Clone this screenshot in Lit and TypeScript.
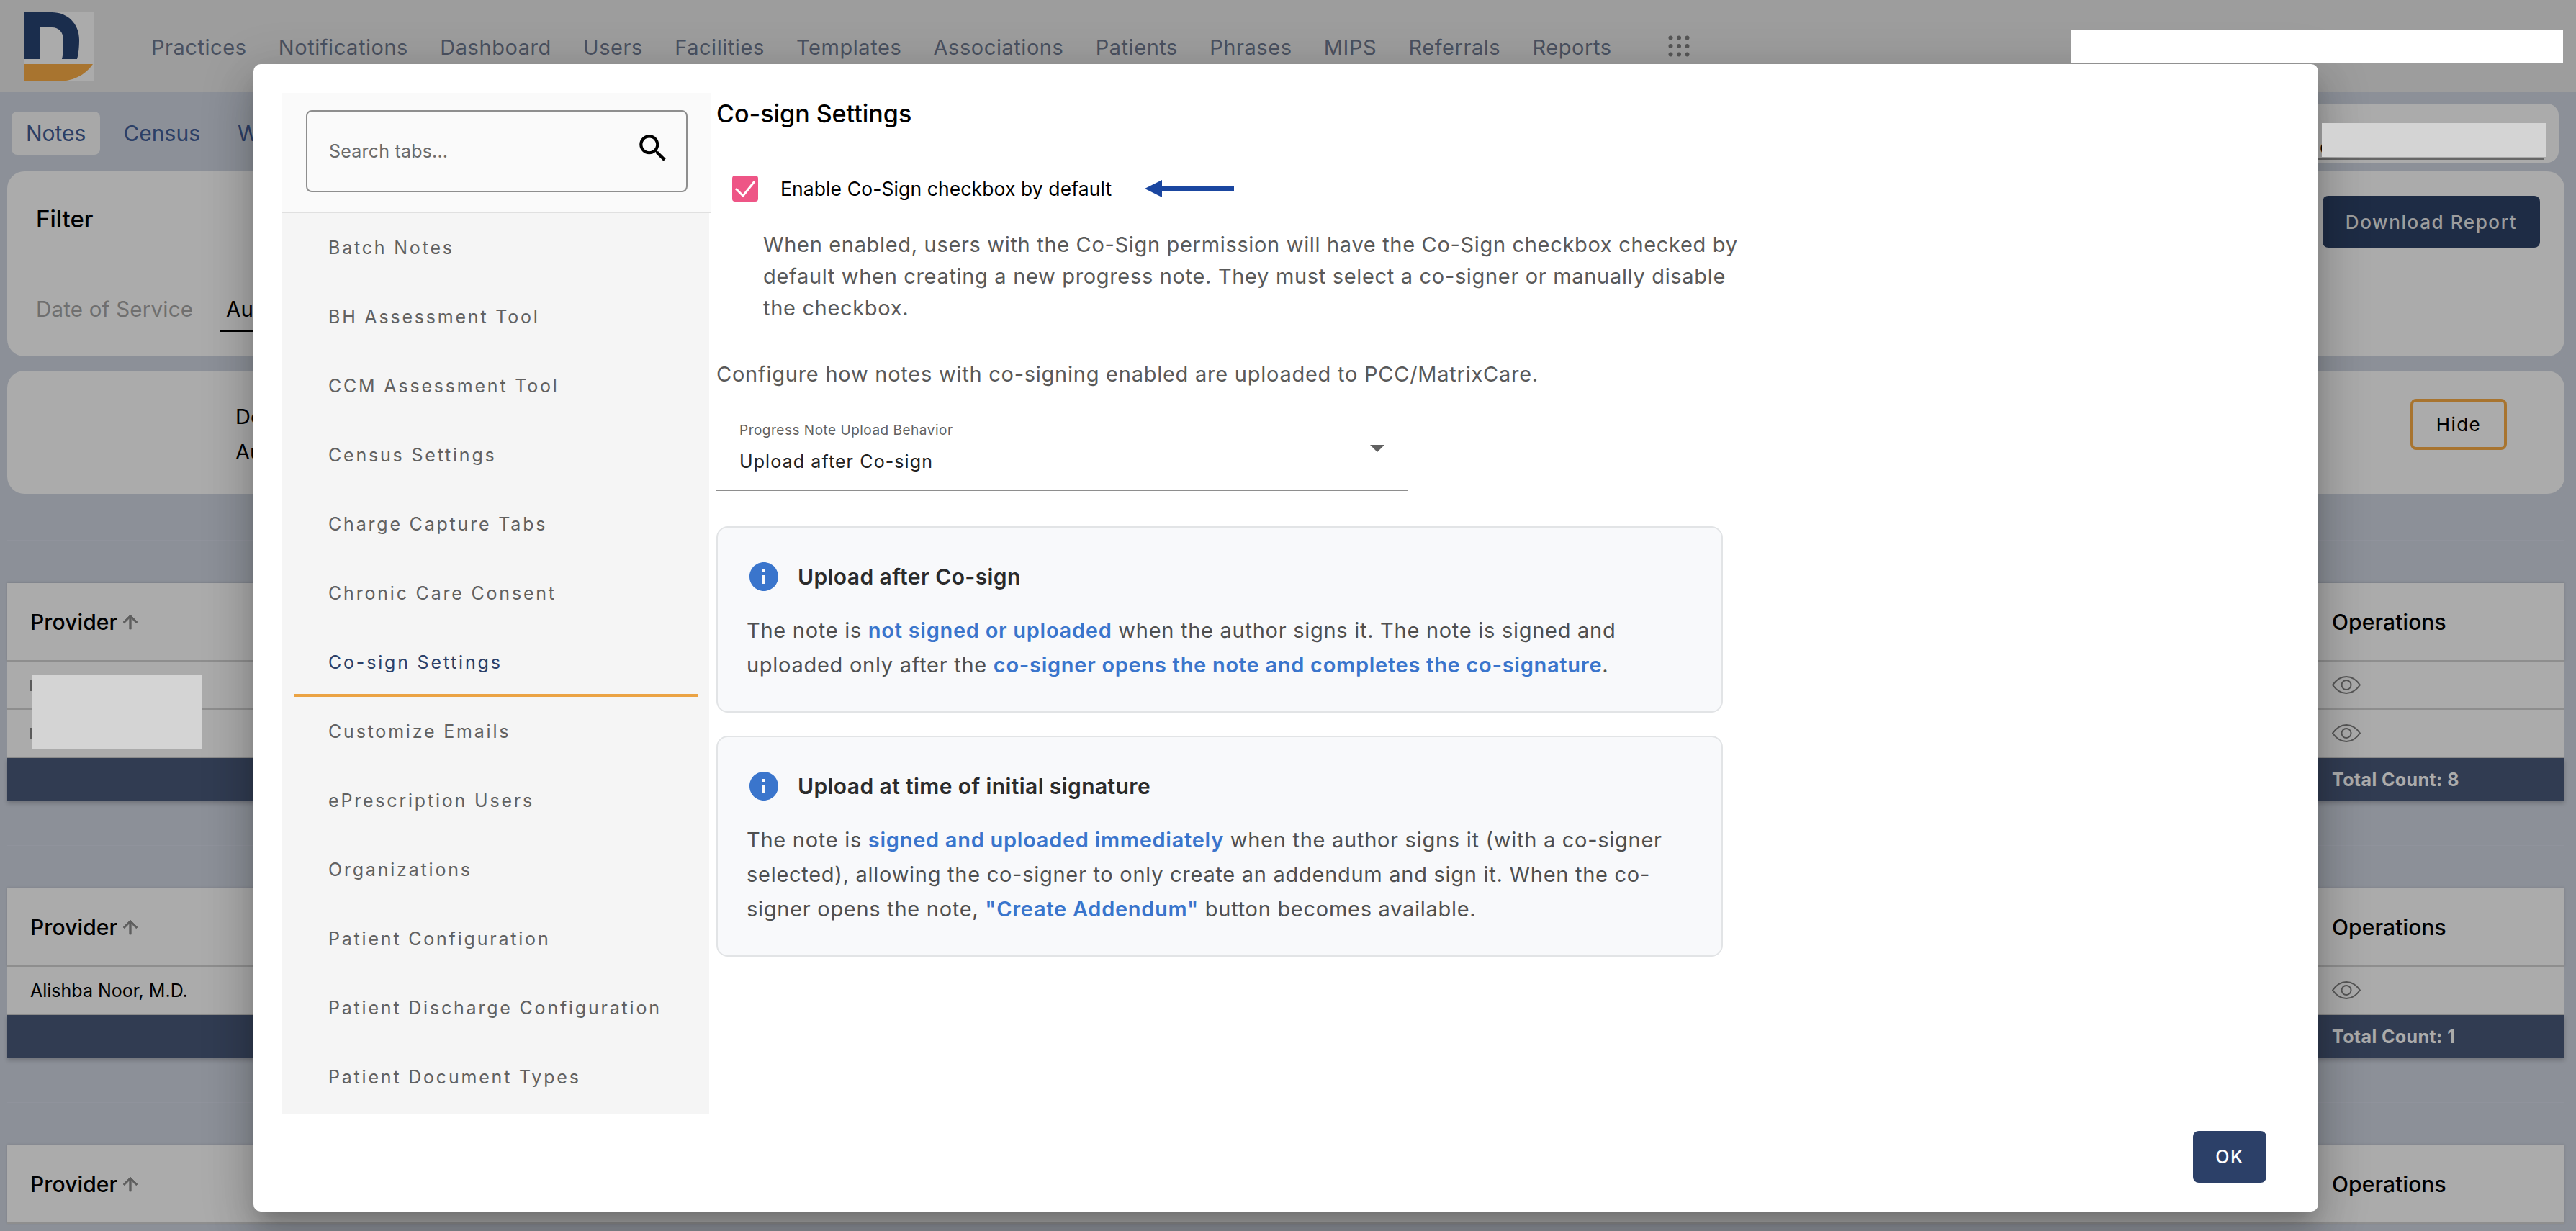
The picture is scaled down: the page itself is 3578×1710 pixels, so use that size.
import { LitElement, html, css, svg } from 'lit';
import { customElement } from 'lit/decorators.js';

const NAV = ['Practices', 'Notifications', 'Dashboard', 'Users', 'Facilities', 'Templates', 'Associations', 'Patients', 'Phrases', 'MIPS', 'Referrals', 'Reports'];
const TABS = ['Batch Notes', 'BH Assessment Tool', 'CCM Assessment Tool', 'Census Settings', 'Charge Capture Tabs', 'Chronic Care Consent', 'Co-sign Settings', 'Customize Emails', 'ePrescription Users', 'Organizations', 'Patient Configuration', 'Patient Discharge Configuration', 'Patient Document Types'];

const eye = html`<svg class="eye" viewBox="0 0 40 27" fill="none" stroke="currentColor" stroke-width="2"><path d="M1 13.5C7 5 13 2 20 2s13 3 19 11.5C33 22 27 25 20 25S7 22 1 13.5z"/><circle cx="20" cy="13.5" r="6.5"/></svg>`;

@customElement('cosign-dialog')
export class CosignDialog extends LitElement {
  static styles = css`
    :host {
      display: flex;
      flex-direction: column;
      box-sizing: border-box;
      width: 2868px;
      height: 1594px;
      padding: 40px 72px 40px 40px;
      background: #fff;
      border-radius: 10px;
      box-shadow: 0 16px 24px -10px rgba(0,0,0,.2), 0 36px 57px 4px rgba(0,0,0,.14), 0 14px 69px 12px rgba(0,0,0,.12);
      font-family: Inter, sans-serif;
      color: #000;
    }
    .body { display: flex; height: 1418px; }
    .side { width: 595px; flex: none; }
    .search-wrap {
      box-sizing: border-box;
      height: 167px;
      padding: 24px 32px 0 33px;
      background: #fafafa;
      border-bottom: 2px solid #e0e0e0;
    }
    .search {
      box-sizing: border-box;
      display: flex;
      align-items: center;
      justify-content: space-between;
      height: 114px;
      padding: 0 21px 0 30px;
      border: 2px solid #8e8e8e;
      border-radius: 8px;
      font-size: 25px;
      letter-spacing: 0.2px;
      color: #6b6b6b;
    }
    .search svg { width: 50px; height: 50px; margin-top: -8px; fill: #000; }
    .tabs { width: 593px; height: 1251px; box-sizing: border-box; padding: 0 16px; background: #f5f5f5; overflow: hidden; }
    .tab {
      box-sizing: border-box;
      display: flex;
      align-items: center;
      height: 96px;
      padding-left: 48px;
      font-size: 25px;
      letter-spacing: 2.8px;
      white-space: nowrap;
      color: #616161;
    }
    .tab.active { color: #2c4068; border-bottom: 4px solid #eba344; padding-top: 4px; }
    .main { margin-left: 8px; flex: 1; min-width: 0; }
    h2 { margin: 0; font-size: 34px; line-height: 58px; font-weight: 500; }
    .check { display: flex; align-items: center; height: 36px; margin: 57px 0 0 22px; }
    .box { width: 36px; height: 36px; border-radius: 4px; background: #ee5586; flex: none; }
    .box svg { display: block; }
    .check-label { margin-left: 31px; font-size: 26.5px; letter-spacing: 0.1px; white-space: nowrap; }
    .arrow { margin-left: 46px; width: 124px; height: 26px; }
    .desc { margin: 38px 0 0 65px; font-size: 29px; line-height: 44px; letter-spacing: 0.67px; color: #595959; white-space: nowrap; }
    .configure { margin-top: 48px; font-size: 29px; line-height: 44px; letter-spacing: 0.75px; color: #595959; white-space: nowrap; }
    .select {
      box-sizing: border-box;
      display: flex;
      justify-content: space-between;
      width: 960px;
      height: 98px;
      margin-top: 42px;
      padding: 0 32px;
      border-bottom: 2px solid #8e8e8e;
    }
    .select small { display: block; margin-top: 2px; font-size: 19px; line-height: 24px; letter-spacing: 0.5px; color: #616161; }
    .select span { display: block; margin-top: 11px; font-size: 25px; line-height: 40px; letter-spacing: 1.1px; color: #222; }
    .caret { width: 0; height: 0; margin-top: 34px; border: 10px solid transparent; border-top: 10px solid #616161; border-bottom: 0; }
    .card {
      box-sizing: border-box;
      width: 1398px;
      margin-top: 49px;
      padding: 48px 40px 40px;
      background: #f8f9fb;
      border: 2px solid #e2e4e6;
      border-radius: 16px;
    }
    .card + .card { margin-top: 32px; }
    .card-head { display: flex; align-items: center; height: 40px; gap: 23px; font-size: 30px; font-weight: 600; letter-spacing: 0.4px; color: #2b2b2b; white-space: nowrap; }
    .card-head svg { width: 48px; height: 48px; fill: #3a75cc; flex: none; }
    .card p { margin: 31px 0 0; font-size: 29px; line-height: 48px; letter-spacing: 0.72px; color: #4f4f4f; white-space: nowrap; }
    .card b { font-weight: 600; color: #3a75cc; }
    .foot { display: flex; justify-content: flex-end; margin-top: 24px; }
    .ok {
      width: 102px;
      height: 72px;
      border: 0;
      border-radius: 8px;
      background: #2c4068;
      color: #fff;
      font: 500 25px Inter, sans-serif;
      letter-spacing: 1.5px;
    }
  `;

  render() {
    return html`
      <div class="body">
        <div class="side">
          <div class="search-wrap">
            <div class="search">
              <span>Search tabs...</span>
              <svg viewBox="0 0 24 24"><path d="M15.5 14h-.79l-.28-.27C15.41 12.59 16 11.11 16 9.5 16 5.91 13.09 3 9.5 3S3 5.91 3 9.5 5.91 16 9.5 16c1.61 0 3.09-.59 4.23-1.57l.27.28v.79l5 4.99L20.49 19l-4.99-5zm-6 0C7.01 14 5 11.99 5 9.5S7.01 5 9.5 5 14 7.01 14 9.5 11.99 14 9.5 14z"/></svg>
            </div>
          </div>
          <div class="tabs">
            ${TABS.map((t) => html`<div class="tab ${t === 'Co-sign Settings' ? 'active' : ''}">${t}</div>`)}
          </div>
        </div>
        <div class="main">
          <h2>Co-sign Settings</h2>
          <div class="check">
            <div class="box"><svg width="36" height="36" viewBox="0 0 36 36" fill="none" stroke="#fff" stroke-width="3"><path d="M5 18l10 10L31 8"/></svg></div>
            <span class="check-label">Enable Co-Sign checkbox by default</span>
            <svg class="arrow" viewBox="0 0 124 26"><path d="M0 13L24 1v9h100v6H24v9z" fill="#1a46a0"/></svg>
          </div>
          <div class="desc">
            When enabled, users with the Co-Sign permission will have the Co-Sign checkbox checked by<br />
            default when creating a new progress note. They must select a co-signer or manually disable<br />
            the checkbox.
          </div>
          <div class="configure">Configure how notes with co-signing enabled are uploaded to PCC/MatrixCare.</div>
          <div class="select">
            <div><small>Progress Note Upload Behavior</small><span>Upload after Co-sign</span></div>
            <div class="caret"></div>
          </div>
          <div class="card">
            <div class="card-head">${this.info()}Upload after Co-sign</div>
            <p>The note is <b>not signed or uploaded</b> when the author signs it. The note is signed and<br />
            uploaded only after the <b>co-signer opens the note and completes the co-signature</b>.</p>
          </div>
          <div class="card">
            <div class="card-head">${this.info()}Upload at time of initial signature</div>
            <p>The note is <b>signed and uploaded immediately</b> when the author signs it (with a co-signer<br />
            selected), allowing the co-signer to only create an addendum and sign it. When the co-<br />
            signer opens the note, <b>"Create Addendum"</b> button becomes available.</p>
          </div>
        </div>
      </div>
      <div class="foot"><button class="ok">OK</button></div>
    `;
  }

  private info() {
    return html`<svg viewBox="0 0 24 24">${svg`<path d="M12 2C6.48 2 2 6.48 2 12s4.48 10 10 10 10-4.48 10-10S17.52 2 12 2zm1 15h-2v-6h2v6zm0-8h-2V7h2v2z"/>`}</svg>`;
  }
}

@customElement('app-root')
export class AppRoot extends LitElement {
  static styles = css`
    :host {
      display: block;
      position: relative;
      height: 1710px;
      overflow: hidden;
      background: #d1d7e3;
      font-family: Inter, sans-serif;
      color: #000;
    }
    header { display: flex; height: 128px; background: #ebebeb; }
    .logo { width: 96px; height: 96px; margin: 17px 0 0 34px; background: #fff; flex: none; }
    nav { display: flex; gap: 44.3px; margin: 44px 0 0 80px; font-size: 29px; line-height: 44px; letter-spacing: 0.55px; color: #6f7990; white-space: nowrap; }
    .apps { width: 30px; height: 30px; margin: 49px 0 0 78px; flex: none; }
    .subnav { display: flex; align-items: flex-start; gap: 12px; height: 110px; padding: 27px 24px 0 16px; box-sizing: border-box; }
    .subtab { height: 60px; padding: 0 20px; line-height: 60px; border-radius: 8px; font-size: 30px; color: #425e98; }
    .subtab.on { background: #fbfbfb; }
    .right-panel { position: relative; width: 600px; height: 82px; margin: -11px 0 0 auto; background: #fff; border-radius: 16px; }
    .right-panel i { position: absolute; left: 0; right: 20px; bottom: 4px; border-bottom: 2px solid #999; }
    .peek { position: absolute; left: 268px; top: 48px; font-size: 28px; line-height: 24px; }
    .panel { margin: 0 16px 20px 10px; background: #fff; border-radius: 24px; box-sizing: border-box; }
    .filter { height: 257px; padding: 34px 34px 0 40px; }
    .filter-top { display: flex; justify-content: space-between; }
    .filter-top h3 { margin: 10px 0 0; font-size: 33px; line-height: 44px; font-weight: 500; }
    .download { width: 302px; height: 72px; border: 0; border-radius: 8px; background: #2d4268; color: #ebebeb; font: 500 26px Inter, sans-serif; letter-spacing: 1.6px; }
    .dates { display: flex; align-items: flex-start; margin-top: 62px; font-size: 29.5px; line-height: 46px; }
    .dates span { color: #a6a6a6; letter-spacing: 0.2px; }
    .dates u { margin-left: 38px; padding: 0 40px 6px 8px; text-decoration: none; border-bottom: 3px solid #000; }
    .summary { display: flex; justify-content: space-between; height: 171px; margin-bottom: 0; padding: 39px 80px 0 317px; }
    .summary div { font-size: 29px; line-height: 49px; }
    .hide { box-sizing: border-box; width: 134px; height: 71px; border: 4px solid #fbae46; border-radius: 8px; background: transparent; color: #000; font: 400 26px Inter, sans-serif; letter-spacing: 1.4px; }
    .section { margin: 0 16px 0 10px; padding: 59px 0 61px; border-top: 1px solid #d7dce9; }
    .section.first { margin-top: 64px; }
    .thead, .row, .total { display: flex; justify-content: space-between; padding-left: 32px; align-items: center; background: #fff; }
    .thead { height: 107px; font-size: 30px; letter-spacing: 0.1px; font-weight: 500; border-bottom: 2px solid #d4d4d4; box-shadow: 0 -1px 3px rgba(0,0,0,.12); }
    .thead .sort { display: flex; align-items: center; gap: 3px; }
    .thead svg { width: 30px; height: 30px; fill: #8c8c8c; stroke: #8c8c8c; stroke-width: 0.6; }
    .row { height: 65px; font-size: 25px; border-bottom: 2px solid #d4d4d4; }
    .stem { display: block; width: 2px; height: 16px; background: #888; }
    .total { height: 60px; background: #4a5a7b; color: #fff; font-size: 25px; font-weight: 700; letter-spacing: 0.4px; box-shadow: 0 3px 6px rgba(0,0,0,.2); }
    .ops { width: 323px; flex: none; display: flex; align-items: center; color: #808080; }
    .thead .ops { color: #000; }
    .total .ops { color: #fff; }
    .eye { width: 40px; height: 27px; }
    .overlay { position: absolute; inset: 0; box-sizing: border-box; padding: 89px 0 0 352px; background: rgba(0,0,0,.33); }
    .mask { position: absolute; }
    .mask.white { left: 2877px; top: 42px; width: 683px; height: 45px; background: #fff; }
    .mask.grey { background: #d4d4d4; }
    .mask.top { left: 3225px; top: 171px; width: 311px; height: 47px; }
    .mask.provider { left: 44px; top: 938px; width: 236px; height: 103px; }
  `;

  private table(rows: string[], total: number) {
    return html`
      <div class="thead">
        <span class="sort">Provider <svg viewBox="0 0 24 24"><path d="M4 12l1.41 1.41L11 7.83V20h2V7.83l5.58 5.59L20 12l-8-8-8 8z"/></svg></span>
        <span class="ops">Operations</span>
      </div>
      ${rows.map((r) => html`<div class="row">${r ? html`<span>${r}</span>` : html`<span class="stem"></span>`}<span class="ops">${eye}</span></div>`)}
      ${total ? html`<div class="total"><span></span><span class="ops">Total Count: ${total}</span></div>` : ''}
    `;
  }

  render() {
    return html`
      <header>
        <div class="logo">
          <svg width="96" height="96" viewBox="0 0 96 96">
            <path d="M0 0h38c22 0 38 16 38 38 0 10-1 20-3 27H52c2-7 2-17 2-27 0-10-6-17-16-17H22v44H0z" fill="#284374" />
            <path d="M0 72h95C84 88 66 96 46 96H0z" fill="#fbae46" />
          </svg>
        </div>
        <nav>${NAV.map((n) => html`<span>${n}</span>`)}</nav>
        <svg class="apps" viewBox="0 0 30 30" fill="#808080">
          ${[3.5, 15, 26.5].flatMap((y) => [3.5, 15, 26.5].map((x) => svg`<circle cx=${x} cy=${y} r="3"/>`))}
        </svg>
      </header>
      <div class="subnav">
        <div class="subtab on">Notes</div>
        <div class="subtab">Census</div>
        <div class="subtab">W</div>
        <div class="right-panel"><span class="peek">c</span><i></i></div>
      </div>
      <div class="panel filter">
        <div class="filter-top"><h3>Filter</h3><button class="download">Download Report</button></div>
        <div class="dates"><span>Date of Service</span><u>Au</u></div>
      </div>
      <div class="panel summary">
        <div>De<br />Au</div>
        <button class="hide">Hide</button>
      </div>
      <div class="section first">${this.table(['', ''], 8)}</div>
      <div class="section">${this.table(['Alishba Noor, M.D.'], 1)}</div>
      <div class="section">${this.table([], 0)}</div>
      <div class="overlay">
        <div class="mask white"></div>
        <div class="mask grey top"></div>
        <div class="mask grey provider"></div>
        <cosign-dialog></cosign-dialog>
      </div>
    `;
  }
}
